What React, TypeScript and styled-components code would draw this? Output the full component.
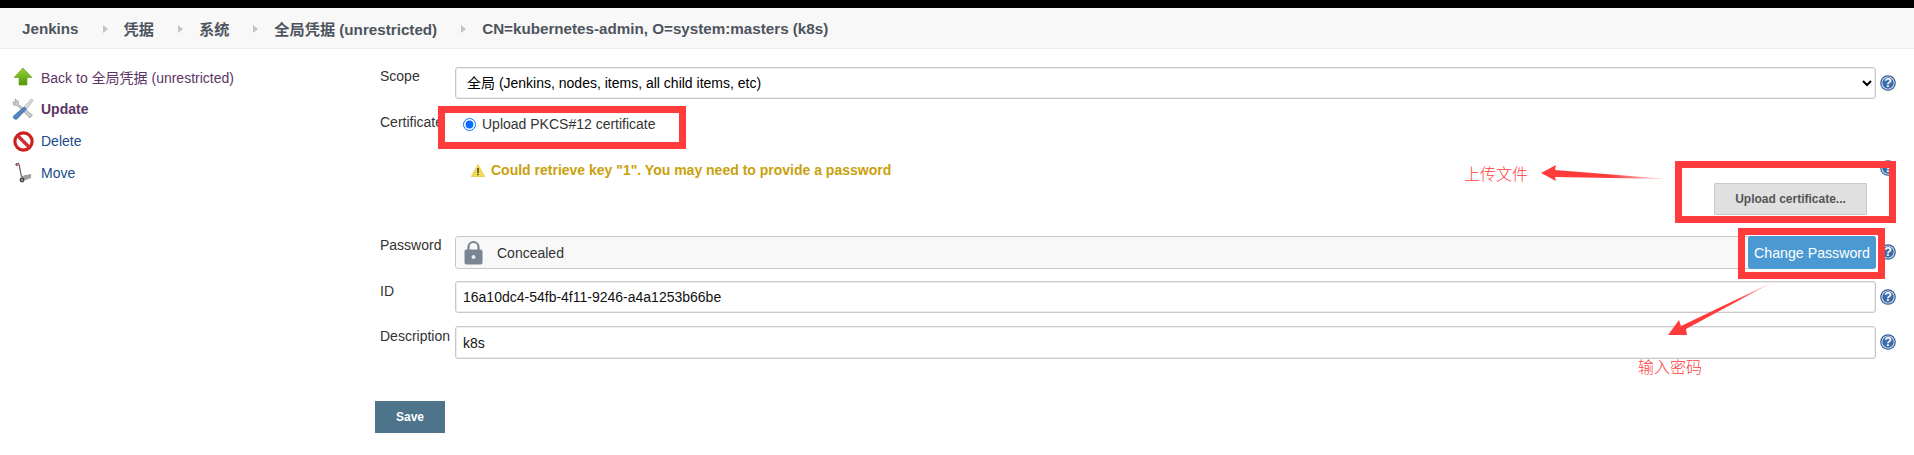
import React from "react";
import styled, { createGlobalStyle } from "styled-components";

const Global = createGlobalStyle`
  html, body { margin: 0; padding: 0; background: #fff; }
  body { font-family: "Liberation Sans", Arial, "Noto Sans CJK SC", sans-serif; font-size: 14px; color: #333; overflow: hidden; }
`;
const Page = styled.div`
  position: relative; width: 1914px; height: 455px; overflow: hidden;
  border-top: 8px solid #000; box-sizing: border-box;
`;
const Crumbs = styled.nav`
  display: flex; align-items: center; height: 40px; padding-left: 22px; box-sizing: content-box;
  background: #f8f8f8; border-bottom: 1px solid #e9edf0;
  font-size: 15.2px; font-weight: 700; color: #4d545d;
`;
const Crumb = styled.span`white-space: nowrap;`;
const CrumbSep = styled.i`
  width: 0; height: 0; margin: 1px 16px 0 24px;
  border-left: 5px solid #c0c4c8; border-top: 4px solid transparent; border-bottom: 4px solid transparent;
`;
const Main = styled.div`display: flex; align-items: flex-start;`;
const Side = styled.aside`width: 375px; flex: none; padding: 12px 0 0 13px; box-sizing: border-box;`;
const SideItem = styled.a<{ $bold?: boolean; $visited?: boolean }>`
  display: flex; align-items: center; height: 32px; gap: 8px; white-space: nowrap;
  font-size: 14px; font-weight: ${p => (p.$bold ? 700 : 400)};
  color: ${p => (p.$visited ? "#5c3566" : "#204a87")};
`;
const IconBox = styled.span`display: flex; width: 20px; height: 24px; align-items: center; justify-content: center; flex: none;`;
const Form = styled.form`flex: 1; padding-top: 18px;`;
const Row = styled.div<{ $top?: number }>`
  display: grid; grid-template-columns: 80px 1421px 38px; margin-top: ${p => p.$top ?? 0}px;
`;
const Label = styled.label<{ $dy?: number }>`
  padding: ${p => p.$dy ?? 0}px 0 0 5px; font-size: 14px; color: #333; white-space: nowrap; overflow: visible;
`;
const Select = styled.select`
  width: 100%; height: 32px; box-sizing: border-box; padding: 0 0 0 7px; background: #fff; font: 14px "Liberation Sans", "Noto Sans CJK SC", sans-serif;
  color: #000; border: 1px solid #c8c8c8; border-radius: 3px; box-shadow: inset 0 0 0 1px #eee;
`;
const Input = styled.input<{ $h: number }>`
  display: block; width: 100%; height: ${p => p.$h}px; box-sizing: border-box; padding: 0 8px 0 7px; background: #fff; font: 14px "Liberation Sans", sans-serif;
  color: #111; border: 1px solid #c8c8c8; border-radius: 3px; box-shadow: inset 0 0 0 1px #eee; outline: none;
`;
const Choice = styled.div`display: flex; align-items: center; gap: 6px; padding: 5px 0 0 8px; height: 16px; font-size: 14px;`;
const Radio = styled.input`width: 13px; height: 13px; margin: 0; accent-color: #0a6cff;`;
const Warning = styled.div`
  display: flex; align-items: center; gap: 6px; margin: 30px 0 0 16px; height: 16px; font-size: 14px; font-weight: 700; color: #c9a10c; white-space: nowrap;
`;
const UploadRow = styled.div`display: flex; justify-content: flex-end; padding-right: 9px; margin-top: 5px;`;
const UploadBtn = styled.button`
  width: 153px; height: 32px; box-sizing: border-box; background: #e0e0e0; border: 1px solid #c8c8c8; border-radius: 1px;
  font: 700 12px "Liberation Sans", sans-serif; color: #555;
`;
const PasswordField = styled.div`
  display: flex; align-items: center; height: 33px; box-sizing: border-box; background: #f8f8f8;
  border: 1px solid #c8c8c8; border-radius: 3px; padding-left: 8px; font-size: 14px; color: #333;
`;
const Concealed = styled.span`flex: 1; margin-left: 14px;`;
const ChangeBtn = styled.button`
  width: 128px; height: 33px; margin-right: -1px; box-sizing: border-box; background: #4b99d2; color: #fff; border: 0; border-radius: 3px;
  font: 14.2px "Liberation Sans", sans-serif; padding: 0;
`;
const HelpWrap = styled.span<{ $pad?: number }>`display: block; padding: ${p => p.$pad ?? 8}px 0 0 4px; line-height: 0;`;
const SaveBtn = styled.button`
  display: block; width: 70px; height: 32px; margin-top: 42px; background: #4d748a; color: #fff; border: 0;
  font: 700 12px "Liberation Sans", sans-serif;
`;
const RedBox = styled.div<{ $x: number; $y: number; $w: number; $h: number }>`
  position: absolute; left: ${p => p.$x}px; top: ${p => p.$y - 8}px; width: ${p => p.$w}px; height: ${p => p.$h}px;
  box-sizing: border-box; border: 7px solid #ff3b3b; pointer-events: none;
`;
const Note = styled.div<{ $x: number; $y: number }>`
  position: absolute; left: ${p => p.$x}px; top: ${p => p.$y - 8}px; font-size: 16px; line-height: 20px; color: #ff3b3b; white-space: nowrap;
  font-family: "Noto Sans CJK SC", sans-serif; font-weight: 300;
`;
const Overlay = styled.svg`position: absolute; left: 0; top: -8px; pointer-events: none;`;

const Help = () => (
  <svg width="16" height="16" viewBox="0 0 16 16">
    <circle cx="8" cy="8" r="7.8" fill="#2f5a96" />
    <circle cx="8" cy="8" r="6.6" fill="#dfe9f5" />
    <circle cx="8" cy="8" r="5.7" fill="#3a6aa8" />
    <text x="8" y="12.4" textAnchor="middle" fontSize="12.5" fontWeight="700" fontFamily="Liberation Sans" fill="#fff">?</text>
  </svg>
);

const UpIcon = () => (
  <svg width="20" height="20" viewBox="0 0 20 20">
    <defs><linearGradient id="g" x1="0" y1="0" x2="0" y2="1"><stop offset="0" stopColor="#9ad03c" /><stop offset="1" stopColor="#4e9a06" /></linearGradient></defs>
    <path d="M10 1 L19 10.5 H14 V18 H6 V10.5 H1 Z" fill="url(#g)" stroke="#5b9e10" strokeWidth=".6" />
  </svg>
);
const ToolsIcon = () => (
  <svg width="22" height="22" viewBox="0 0 22 22" style={{ flex: "none" }}>
    <path d="M3 1 L6.5 3.5 L6.5 6.5 L20.5 17 L18 20 L5 7.5 L1.5 7 L1 3.5 L3.5 5 Z" fill="#c9cdcd" stroke="#8a8f8f" strokeWidth=".6" />
    <path d="M19.5 1 L21 2.5 L14.5 11 L12 9 Z" fill="#dde0e0" stroke="#8a8f8f" strokeWidth=".6" />
    <path d="M12 9 L14.5 11 L5 21 C3 22 .5 20 1.5 18 Z" fill="#4f86c0" stroke="#2f5f96" strokeWidth=".6" />
  </svg>
);
const StopIcon = () => (
  <svg width="21" height="21" viewBox="0 0 20 20" style={{ flex: "none" }}>
    <circle cx="10" cy="10" r="8.2" fill="#fff" stroke="#cc1f1f" strokeWidth="3" />
    <path d="M4.5 4.5 L15.5 15.5" stroke="#d42a2a" strokeWidth="3.2" />
  </svg>
);
const TruckIcon = () => (
  <svg width="20" height="22" viewBox="0 0 20 22">
    <path d="M3 2 L6 1.5 M6 2 L8.5 15 L18 13" fill="none" stroke="#666" strokeWidth="1.3" />
    <path d="M2.5 2 L4.5 4" stroke="#c33" strokeWidth="1.4" />
    <path d="M8 14.5 L18 12.5 L18 16 L9 19.5 Z" fill="#a0a0a0" />
    <circle cx="9" cy="18" r="2.4" fill="#444" />
    <circle cx="9" cy="18" r=".9" fill="#bbb" />
  </svg>
);
const LockIcon = () => (
  <svg width="19" height="25" viewBox="0 0 19 25" style={{ flex: "none" }}>
    <path d="M4.5 11 V7 a5 5 0 0 1 10 0 V11" fill="none" stroke="#7a8594" strokeWidth="2.2" />
    <rect x="0.5" y="9.5" width="18" height="15" rx="2" fill="#7a8594" />
    <circle cx="9.5" cy="17" r="2" fill="#e6e9ee" />
  </svg>
);
const WarnIcon = () => (
  <svg width="14" height="13" viewBox="0 0 14 13" style={{ flex: "none" }}>
    <path d="M7 .5 L13.7 12.5 H.3 Z" fill="#f3dc55" stroke="#d8bc2c" strokeWidth=".6" />
    <rect x="6.3" y="4" width="1.4" height="5" fill="#333" />
    <rect x="6.3" y="9.8" width="1.4" height="1.4" fill="#333" />
  </svg>
);

export default function App() {
  return (
    <Page>
      <Global />
      <Crumbs>
        <Crumb>Jenkins</Crumb><CrumbSep />
        <Crumb>凭据</Crumb><CrumbSep />
        <Crumb>系统</Crumb><CrumbSep />
        <Crumb>全局凭据 (unrestricted)</Crumb><CrumbSep />
        <Crumb>CN=kubernetes-admin, O=system:masters (k8s)</Crumb>
      </Crumbs>
      <Main>
        <Side>
          <SideItem $visited><IconBox><UpIcon /></IconBox>Back to 全局凭据 (unrestricted)</SideItem>
          <SideItem $bold $visited><IconBox><ToolsIcon /></IconBox>Update</SideItem>
          <SideItem><IconBox><StopIcon /></IconBox>Delete</SideItem>
          <SideItem><IconBox><TruckIcon /></IconBox>Move</SideItem>
        </Side>
        <Form>
          <Row>
            <Label $dy={1}>Scope</Label>
            <Select defaultValue="a"><option value="a">全局 (Jenkins, nodes, items, all child items, etc)</option></Select>
            <HelpWrap><Help /></HelpWrap>
          </Row>
          <Row $top={12}>
            <Label $dy={3}>Certificate</Label>
            <div>
              <Choice><Radio type="radio" defaultChecked readOnly /><span>Upload PKCS#12 certificate</span></Choice>
              <Warning><WarnIcon /><span>Could retrieve key "1". You may need to provide a password</span></Warning>
              <UploadRow><UploadBtn type="button">Upload certificate...</UploadBtn></UploadRow>
            </div>
            <HelpWrap $pad={49}><Help /></HelpWrap>
          </Row>
          <Row $top={21}>
            <Label $dy={1}>Password</Label>
            <PasswordField>
              <LockIcon />
              <Concealed>Concealed</Concealed>
              <ChangeBtn type="button">Change Password</ChangeBtn>
            </PasswordField>
            <HelpWrap><Help /></HelpWrap>
          </Row>
          <Row $top={12}>
            <Label $dy={2}>ID</Label>
            <Input $h={32} defaultValue="16a10dc4-54fb-4f11-9246-a4a1253b66be" />
            <HelpWrap><Help /></HelpWrap>
          </Row>
          <Row $top={13}>
            <Label $dy={2}>Description</Label>
            <Input $h={33} defaultValue="k8s" />
            <HelpWrap><Help /></HelpWrap>
          </Row>
          <SaveBtn type="button">Save</SaveBtn>
        </Form>
      </Main>
      <RedBox $x={438} $y={106} $w={248} $h={43} />
      <RedBox $x={1675} $y={161} $w={221} $h={62} />
      <RedBox $x={1738} $y={228} $w={147} $h={51} />
      <Note $x={1464} $y={163}>上传文件</Note>
      <Note $x={1638} $y={356}>输入密码</Note>
      <Overlay width="1914" height="455" viewBox="0 0 1914 455">
        <defs>
          <linearGradient id="fadeA" x1="0" y1="0" x2="1" y2="0"><stop offset=".55" stopColor="#ff3b3b" /><stop offset="1" stopColor="#ff3b3b" stopOpacity=".1" /></linearGradient>
          <linearGradient id="fadeB" x1="1" y1="0" x2="0" y2="1"><stop offset="0" stopColor="#ff3b3b" stopOpacity=".2" /><stop offset=".35" stopColor="#ff3b3b" /></linearGradient>
        </defs>
        <polygon points="1541,173 1556,165 1555,170 1668,179 1555,177 1556,181" fill="url(#fadeA)" />
        <polygon points="1668,335 1679,320 1681,326 1773,282 1686,329 1687,335" fill="url(#fadeB)" />
      </Overlay>
    </Page>
  );
}
